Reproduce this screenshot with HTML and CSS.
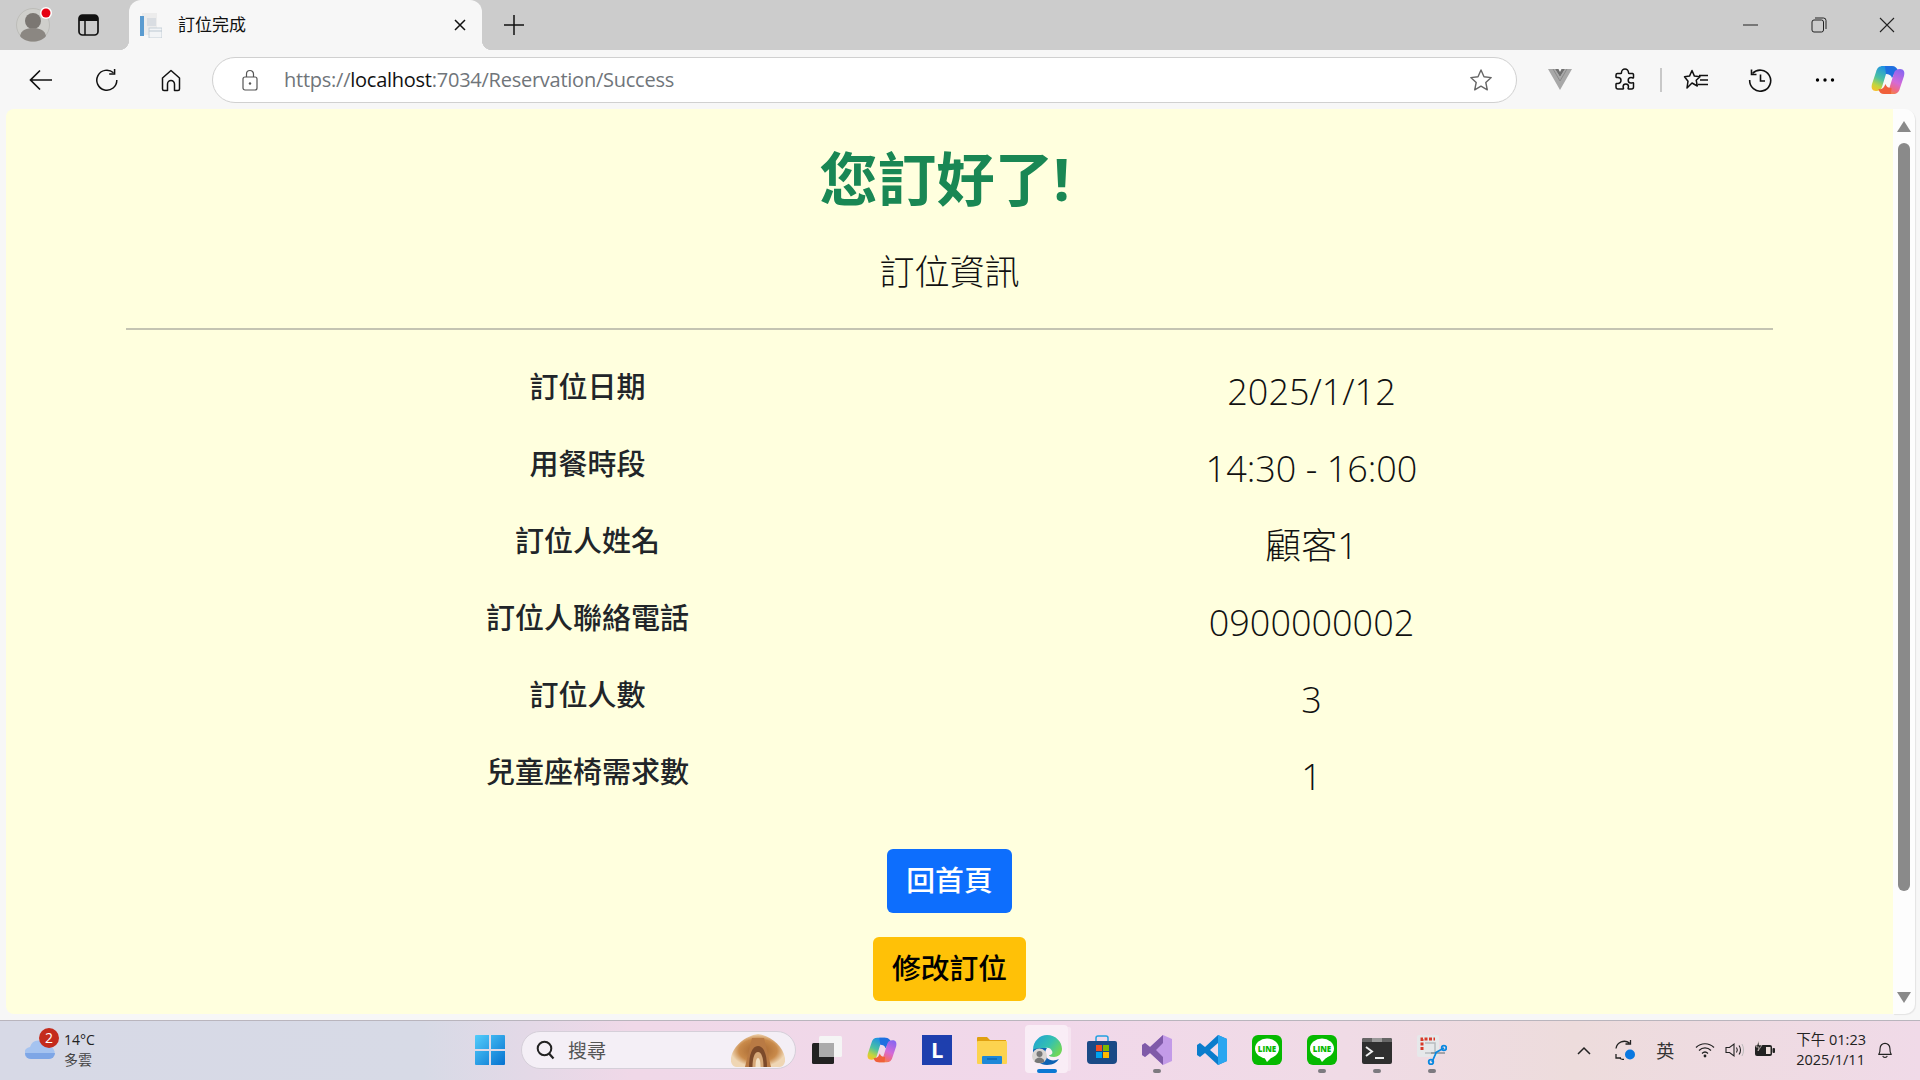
FILE: index.html
```html
<!DOCTYPE html>
<html lang="zh-Hant">
<head>
<meta charset="utf-8">
<title>訂位完成</title>
<link rel="stylesheet" href="styles.css">
</head>
<body>
<div class="browser">
  <header class="tabstrip">
    <div class="profile">
      <svg width="42" height="50" viewBox="0 0 42 50"><circle cx="19" cy="25" r="16.500" fill="#cfcfcb" stroke="#bdbdb9"/><circle cx="19" cy="21" r="8" fill="#7b7772"/><path d="M6 36c1-6 7-8 13-8s12 2 13 8c-3 4-8 5.500-13 5.500S9 40 6 36z" fill="#8b8782"/><circle cx="32" cy="13" r="6" fill="#fff"/><circle cx="32" cy="13" r="4.500" fill="#e60012"/></svg>
    </div>
    <div class="vtabs">
      <svg width="21" height="22" viewBox="0 0 21 22"><rect x="1" y="1" width="19" height="20" rx="3.500" fill="none" stroke="#111" stroke-width="1.700"/><path d="M1 4.500A3.500 3.500 0 0 1 4.500 1h12A3.500 3.500 0 0 1 20 4.500V7H1z" fill="#111"/><path d="M7 7v14" stroke="#111" stroke-width="1.500"/></svg>
    </div>
    <div class="tab">
      <svg class="favicon" width="23" height="25" viewBox="0 0 23 25"><rect x="3" y="0" width="15" height="22" fill="#ececec"/><rect x="1" y="3" width="4" height="20" fill="#5a9bd0"/><rect x="8" y="5" width="9" height="8" fill="#d9dde2"/><rect x="10" y="15" width="13" height="10" fill="#f2f4f6" stroke="#bcc8d2" stroke-width=".8"/><path d="M10 18h13" stroke="#bcc8d2"/></svg>
      <span class="tab-title">訂位完成</span>
      <svg class="tab-close" width="14" height="14" viewBox="0 0 14 14"><path d="M2 2l10 10M12 2L2 12" stroke="#111" stroke-width="1.500"/></svg>
    </div>
    <svg class="newtab" width="20" height="20" viewBox="0 0 20 20"><path d="M10 0v20M0 10h20" stroke="#111" stroke-width="1.500"/></svg>
    <div class="winctl">
      <svg width="16" height="16" viewBox="0 0 16 16"><path d="M0 8h15" stroke="#222" stroke-width="1"/></svg>
      <svg width="16" height="16" viewBox="0 0 16 16"><rect x="1" y="3" width="11.500" height="12" rx="2" fill="none" stroke="#222"/><path d="M4 1h8.500a2.500 2.500 0 0 1 2.500 2.500V12" fill="none" stroke="#222"/></svg>
      <svg width="16" height="16" viewBox="0 0 16 16"><path d="M1 1l14 14M15 1L1 15" stroke="#222" stroke-width="1.100"/></svg>
    </div>
  </header>

  <nav class="toolbar">
    <svg class="tb back" width="28" height="24" viewBox="0 0 28 24"><path d="M13 2.500L3.500 12l9.500 9.500M3.500 12H25" fill="none" stroke="#111" stroke-width="1.700"/></svg>
    <svg class="tb reload" width="24" height="24" viewBox="0 0 24 24"><path d="M18.500 4.800A10 10 0 1 0 21.800 12" fill="none" stroke="#111" stroke-width="1.500"/><path d="M19.600 1v5h-5.400" fill="none" stroke="#111" stroke-width="1.500"/></svg>
    <svg class="tb home" width="22" height="24" viewBox="0 0 22 24"><path d="M11 2.500l8.500 7.500v11a1.500 1.500 0 0 1-1.500 1.500h-3.500V16a3.500 3.500 0 0 0-7 0v6.500H4A1.500 1.500 0 0 1 2.500 21V10z" fill="none" stroke="#111" stroke-width="1.500" stroke-linejoin="round"/></svg>
    <div class="omnibox">
      <svg width="18" height="24" viewBox="0 0 18 24"><rect x="2" y="9" width="14" height="13" rx="2" fill="none" stroke="#555" stroke-width="1.200"/><path d="M5.500 9V6a3.500 3.500 0 0 1 7 0v3" fill="none" stroke="#555" stroke-width="1.200"/><circle cx="9" cy="15.500" r="1.200" fill="#555"/></svg>
      <span class="url">https://<b>localhost</b>:7034/Reservation/Success</span>
      <svg class="star" width="24" height="24" viewBox="0 0 24 24"><path d="M12 2l3 6.800 7.200.8-5.400 4.900 1.500 7.300L12 18.200l-6.300 3.600 1.500-7.300L1.800 9.600 9 8.800z" fill="none" stroke="#666" stroke-width="1.400" stroke-linejoin="round"/></svg>
    </div>
    <div class="tb-right">
      <svg class="ext-v" width="24" height="22" viewBox="0 0 24 22"><path d="M0 0h7l5 8 5-8h7L12 21z" fill="#a8a8a8"/><path d="M7 0h3.500L12 3l1.500-3H17l-5 8z" fill="#6f6f6f"/><path d="M5 0l7 12 7-12" fill="none" stroke="#8a8a8a" stroke-width="1"/></svg>
      <svg class="ext-p" width="24" height="24" viewBox="0 0 24 24"><path d="M8.500 4.500a3.500 3.500 0 0 1 7 0c0 .7 0 1 .5 1h3.500a1.500 1.500 0 0 1 1 1v3c0 1-1.500 0-2.500 0a2.800 2.800 0 0 0 0 5.600c1 0 2.500-1 2.500 0V19a2 2 0 0 1-2 2h-3c-1 0 0-1.500 0-2.300a2.700 2.700 0 0 0-5.400 0c0 .8 1 2.300 0 2.300H5a2 2 0 0 1-2-2v-3c0-1 1.500-.5 2-.5a3 3 0 0 0 0-6c-.6 0-2 .4-2-.5V7a1.500 1.500 0 0 1 1.500-1.500H8c.5 0 .5-.4.500-1z" fill="none" stroke="#111" stroke-width="1.500"/></svg>
      <span class="tb-sep"></span>
      <svg class="fav" width="26" height="24" viewBox="0 0 26 24"><path d="M9 2.500l2.400 5.600 5.600.6-3.800 3.500 1.100 5.800L9 15 4 20l1-6.800L1.500 8.800l5-.7z" fill="none" stroke="#111" stroke-width="1.500" stroke-linejoin="round"/><path d="M16 7.500h9M17 12h8M15 16.500h10" stroke="#111" stroke-width="1.500"/></svg>
      <svg class="hist" width="24" height="24" viewBox="0 0 24 24"><path d="M4.500 5.500A10.500 10.500 0 1 1 1.700 12" fill="none" stroke="#111" stroke-width="1.600"/><path d="M3.500 1.500v5h5" fill="none" stroke="#111" stroke-width="1.600"/><path d="M12.500 6.500V13H17" fill="none" stroke="#111" stroke-width="1.600"/></svg>
      <svg class="more" width="20" height="6" viewBox="0 0 20 6"><circle cx="2.500" cy="3" r="1.700"/><circle cx="10" cy="3" r="1.700"/><circle cx="17.500" cy="3" r="1.700"/></svg>
      <svg class="copilot" width="34" height="30" viewBox="0 0 34 30"><use href="#copilot-mark"/></svg>
    </div>
  </nav>

  <main class="viewport">
    <div class="page">
      <h1 class="headline">您訂好了!</h1>
      <h2 class="subhead">訂位資訊</h2>
      <hr class="rule">
      <div class="details">
        <div class="label">訂位日期</div><div class="value">2025/1/12</div>
        <div class="label">用餐時段</div><div class="value">14:30 - 16:00</div>
        <div class="label">訂位人姓名</div><div class="value">顧客1</div>
        <div class="label">訂位人聯絡電話</div><div class="value">0900000002</div>
        <div class="label">訂位人數</div><div class="value">3</div>
        <div class="label">兒童座椅需求數</div><div class="value">1</div>
      </div>
      <div class="actions">
        <a class="btn btn-blue">回首頁</a>
        <a class="btn btn-yellow">修改訂位</a>
      </div>
    </div>
    <aside class="scrollbar">
      <span class="arrow up"></span>
      <span class="thumb"></span>
      <span class="arrow down"></span>
    </aside>
  </main>

  <footer class="taskbar">
    <div class="weather">
      <svg class="cloud" width="30" height="20" viewBox="0 0 30 20"><path d="M6 20a6 6 0 0 1-1-12 9 9 0 0 1 17-1 6.500 6.500 0 0 1 2 13z" fill="#a5c3f0"/><path d="M0 14h30a6 6 0 0 1-6 6H6a6 6 0 0 1-6-6z" fill="#7ea6e6"/></svg>
      <span class="badge">2</span>
      <div class="weather-text"><span>14°C</span><span class="muted">多雲</span></div>
    </div>
    <div class="task-center">
      <svg class="winlogo" width="30" height="30" viewBox="0 0 30 30"><defs><linearGradient id="w" x1="0" y1="0" x2="1" y2="1"><stop offset="0" stop-color="#52cdfb"/><stop offset="1" stop-color="#0672d0"/></linearGradient></defs><path d="M0 1a1 1 0 0 1 1-1h13v14H0zM16 0h13a1 1 0 0 1 1 1v13H16zM0 16h14v14H1a1 1 0 0 1-1-1zM16 16h14v13a1 1 0 0 1-1 1H16z" fill="url(#w)"/></svg>
      <div class="searchbox">
        <svg class="search-icon" width="19" height="20" viewBox="0 0 19 20"><circle cx="8.500" cy="8.500" r="6.800" fill="none" stroke="#222" stroke-width="2"/><path d="M13 13.500l4.500 5" stroke="#222" stroke-width="2.200"/></svg>
        <span class="search-text">搜尋</span>
        <svg class="search-art" width="54" height="33" viewBox="0 0 54 33"><defs><radialGradient id="art"><stop offset="0" stop-color="#a0612c"/><stop offset=".7" stop-color="#c98a4a"/><stop offset="1" stop-color="#efd6b4"/></radialGradient></defs><path d="M0 24C2 12 14 2 27 0c13 2 25 12 27 24 1 5-2 9-5 9H5c-3 0-6-4-5-9z" fill="url(#art)"/><path d="M14 33L21 4h12l7 29z" fill="#b97a44"/><path d="M18 33c0-12 3-21 9-21s9 9 9 21z" fill="#7c4a2a"/><path d="M21.500 33c0-9 2-15 5.500-15s5.500 6 5.500 15z" fill="#d6a878"/><path d="M24.500 33c0-6 1-9 2.500-9s2.500 3 2.500 9z" fill="#f3e2c8"/></svg>
      </div>
      <div class="apps">
        <div class="app"><svg width="30" height="30" viewBox="0 0 30 30"><rect x="7" y="1" width="23" height="21" rx="1.500" fill="#f5f5f5"/><rect x="0" y="8" width="22" height="21" rx="1.500" fill="#222"/><rect x="7" y="8" width="15" height="14" fill="#ababab"/></svg></div>
        <div class="app"><svg width="30" height="30" viewBox="0 0 34 30"><use href="#copilot-mark"/></svg></div>
        <div class="app"><svg width="30" height="30" viewBox="0 0 30 30"><rect width="30" height="30" fill="#1e3fae"/><text x="9" y="23" class="l-mark">L</text></svg></div>
        <div class="app"><svg width="30" height="30" viewBox="0 0 30 30"><path d="M0 3a1 1 0 0 1 1-1h9l3 3h16v6H0z" fill="#e0a010"/><rect y="6" width="30" height="23" rx="1" fill="#fcd34f"/><rect x="5" y="21" width="20" height="8" rx="1" fill="#1e88d8"/><path d="M10 24h10" stroke="#0b5fa8" stroke-width="1.200"/></svg></div>
        <div class="app active"><svg width="30" height="30" viewBox="0 0 30 30"><defs><linearGradient id="e" x1="0" y1="0" x2="1" y2=".6"><stop offset="0" stop-color="#1f9fd8"/><stop offset=".6" stop-color="#35c1b0"/><stop offset="1" stop-color="#6fd65a"/></linearGradient></defs><path d="M1 15C1 6 8 0 15 0c9 0 15 7 15 14 0 5-4 8-8 8-3 0-5-1-5-2 3 0 4-2 3-4-1-3-4-4-7-3-6 1-9 6-12 9z" fill="url(#e)"/><path d="M1 15c-1 9 7 15 14 15 6 0 10-3 12-6-4 2-9 2-12-1-2-2-3-6 0-10-7 0-11 0-14 2z" fill="#0e63b4"/><circle cx="7.500" cy="21" r="7.500" fill="#d9d5d2"/><circle cx="7.500" cy="19" r="3" fill="#777"/><path d="M2.500 26.500c1-3 3-4 5-4s4 1 5 4c-2 2-8 2-10 0z" fill="#777"/></svg></div>
        <div class="app"><svg width="30" height="30" viewBox="0 0 30 30"><path d="M9 6V3a2 2 0 0 1 2-2h8a2 2 0 0 1 2 2v3" fill="none" stroke="#23a0e0" stroke-width="1.500"/><path d="M0 8a2 2 0 0 1 2-2h26a2 2 0 0 1 2 2v17a4 4 0 0 1-4 4H4a4 4 0 0 1-4-4z" fill="#1a4a86"/><rect x="9" y="10" width="6" height="6" fill="#f25022"/><rect x="16" y="10" width="6" height="6" fill="#7fba00"/><rect x="9" y="17" width="6" height="6" fill="#00a4ef"/><rect x="16" y="17" width="6" height="6" fill="#ffb900"/></svg></div>
        <div class="app running"><svg width="30" height="30" viewBox="0 0 30 30"><path d="M21 0l9 4v22l-9 4-13-12-5 4-3-2V10l3-2 5 4z" fill="#c39be8"/><path d="M21 0L8 12 3 8l-3 2v10l3 2 5-4 13 12v-8l-7-7 7-7z" fill="#7f5aa8"/></svg></div>
        <div class="app"><svg width="30" height="30" viewBox="0 0 30 30"><path d="M21 0l9 4v22l-9 4L8 18l-5 4-3-2V10l3-2 5 4z" fill="#0a7ccc"/><path d="M21 0l9 4v22l-9 4z" fill="#2aa6f0"/><path d="M21 8l-8 7 8 7z" fill="#f0dcec"/></svg></div>
        <div class="app"><svg width="30" height="30" viewBox="0 0 30 30"><rect width="30" height="30" rx="6" fill="#06b900"/><ellipse cx="15" cy="13.500" rx="12" ry="10" fill="#fff"/><path d="M12 22l3 5 5-5z" fill="#fff"/><text x="15" y="16.500" class="line-mark">LINE</text></svg></div>
        <div class="app running"><svg width="30" height="30" viewBox="0 0 30 30"><rect width="30" height="30" rx="6" fill="#06b900"/><ellipse cx="15" cy="13.500" rx="12" ry="10" fill="#fff"/><path d="M12 22l3 5 5-5z" fill="#fff"/><text x="15" y="16.500" class="line-mark">LINE</text></svg></div>
        <div class="app running"><svg width="30" height="30" viewBox="0 0 30 30"><rect y="3" width="30" height="26" rx="2" fill="#2f2f2f"/><path d="M0 5a2 2 0 0 1 2-2h26a2 2 0 0 1 2 2v2H0z" fill="#666"/><rect x="10" y="3" width="10" height="4" fill="#999"/><path d="M4 12l6 4.500-6 4.500" fill="none" stroke="#eee" stroke-width="2"/><path d="M13 23h9" stroke="#eee" stroke-width="2"/></svg></div>
        <div class="app running"><svg width="30" height="30" viewBox="0 0 30 30"><rect width="22" height="22" rx="2" fill="#e6e8ea"/><path d="M5 15V4h13" fill="none" stroke="#d83a2a" stroke-width="3" stroke-dasharray="3 1.500"/><path d="M8 8h10v10H8" fill="none" stroke="#b8bcc0" stroke-width="1.500"/><path d="M14 18h14" stroke="#8a9096" stroke-width="1.500"/><path d="M15 27l4-9M27 13l-9 5" stroke="#0a88e0" stroke-width="1.800"/><circle cx="14" cy="27" r="2.300" fill="none" stroke="#0a88e0" stroke-width="1.800"/><circle cx="27" cy="13" r="2.300" fill="none" stroke="#0a88e0" stroke-width="1.800"/></svg></div>
      </div>
    </div>
    <div class="tray">
      <svg class="chev" width="14" height="9" viewBox="0 0 14 9"><path d="M1 8l6-6 6 6" fill="none" stroke="#222" stroke-width="1.500"/></svg>
      <svg class="sync" width="20" height="20" viewBox="0 0 20 20"><path d="M1 8.500A8.500 8.500 0 0 1 14.500 3M15.500 0v4h-5M5 18.500c1.500.7 3 1 4 1M1 14v4h5" fill="none" stroke="#222" stroke-width="1.300"/><circle cx="15" cy="14.500" r="5" fill="#0a78e0"/></svg>
      <span class="ime">英</span>
      <svg class="wifi" width="20" height="16" viewBox="0 0 20 16"><path d="M1 5.500c5-5 13-5 18 0M4 8.500c3.500-3.500 8.500-3.500 12 0M7 11.500c1.800-1.800 4.200-1.800 6 0" fill="none" stroke="#222" stroke-width="1.200"/><circle cx="10" cy="14" r="1.400" fill="#222"/></svg>
      <svg class="vol" width="20" height="16" viewBox="0 0 20 16"><path d="M1 5.500h3.500L9 2v12l-4.500-3.500H1z" fill="none" stroke="#222" stroke-width="1.100"/><path d="M11.500 5.500c1 1.500 1 3.500 0 5M14 3.500c2 2.500 2 6.500 0 9" fill="none" stroke="#222" stroke-width="1.100"/><path d="M17 2c2 3.500 2 8.500 0 12" fill="none" stroke="#bbb" stroke-width="1"/></svg>
      <svg class="batt" width="20" height="18" viewBox="0 0 20 18"><rect x="0" y="4" width="17" height="11" rx="2" fill="#222"/><rect x="17.500" y="7" width="2.500" height="5" rx="1" fill="#222"/><rect x="11" y="6" width="4.500" height="7" fill="#eedfdc"/><path d="M4 0L1 6h3l-1 4 4-6H4z" fill="#222" stroke="#eedfdc" stroke-width=".6"/></svg>
      <div class="clock"><span>下午 01:23</span><span>2025/1/11</span></div>
      <svg class="bell" width="16" height="18" viewBox="0 0 18 20"><path d="M2 15c1.500-2 1.500-4 1.500-7a5.500 5.500 0 0 1 11 0c0 3 0 5 1.500 7z" fill="none" stroke="#222" stroke-width="1.300" stroke-linejoin="round"/><path d="M6.500 16.500c.5 2.500 4.500 2.500 5 0" fill="none" stroke="#222" stroke-width="1.300"/></svg>
    </div>
  </footer>
</div>
<svg class="defs" width="0" height="0"><defs>
  <linearGradient id="cpB" x1=".6" y1="0" x2=".2" y2="1"><stop offset="0" stop-color="#1b8fe8"/><stop offset=".5" stop-color="#4cc2a0"/><stop offset=".8" stop-color="#c5d53c"/><stop offset="1" stop-color="#f7c12a"/></linearGradient>
  <linearGradient id="cpC" x1=".7" y1="0" x2=".3" y2="1"><stop offset="0" stop-color="#8a66f0"/><stop offset=".5" stop-color="#d46ad8"/><stop offset=".8" stop-color="#f06a80"/><stop offset="1" stop-color="#f28a3c"/></linearGradient>
  <symbol id="copilot-mark" viewBox="0 0 34 30">
    <path d="M12 1h9c-4 1-5 5-6 8l-4 13c-1 3-3 4-6 4-4 0-5-3-4-7L5 7c1-4 3-6 7-6z" fill="url(#cpB)"/>
    <path d="M14 1h7c3 0 5.500 2 6 5 .2 1 0 2.500 0 2.500-3-.5-4 0-5 3l-1 1.500c-1-3-3-4-6-4z" fill="#1f6fe0"/>
    <path d="M22 29h-9c4-1 5-5 6-8l4-13c1-3 3-4 6-4 4 0 5 3 4 7l-4 12c-1 4-3 6-7 6z" fill="url(#cpC)"/>
    <path d="M20 29h-7c-3 0-5-2-5.500-5 3 .5 5-.5 6-3l1-2c1 3 3 4 6 4z" fill="#f0603a"/>
  </symbol>
</defs></svg>
</body>
</html>
```

FILE: styles.css
```css
* { box-sizing: border-box; }
html, body { margin: 0; height: 100%; overflow: hidden; }
body {
  font-family: "Open Sans", "Noto Sans CJK TC", sans-serif;
  color: #212529;
}
.browser { width: 1920px; height: 1080px; display: flex; flex-direction: column; background: #f7f7f7; }
.defs { display: block; height: 0; position: absolute; }

/* tab strip */
.tabstrip { height: 50px; flex: none; background: #cccccc; display: flex; align-items: center; }
.profile { width: 42px; margin-left: 14px; height: 50px; }
.vtabs { margin-left: 22px; width: 21px; height: 22px; }
.tab {
  width: 353px; height: 50px; margin-left: 30px; position: relative;
  background: #f7f7f7; border-radius: 12px 12px 0 0;
  display: flex; align-items: center;
  padding-left: 10px; padding-right: 15px;
}
.tab::before, .tab::after { content: ""; position: absolute; bottom: 0; width: 10px; height: 10px; }
.tab::before { left: -10px; background: radial-gradient(circle at 0 0, transparent 10px, #f7f7f7 10.5px); }
.tab::after { right: -10px; background: radial-gradient(circle at 100% 0, transparent 10px, #f7f7f7 10.5px); }
.favicon { flex: none; }
.tab-title { margin-left: 16px; margin-top: -4px; font-size: 17px; color: #111; flex: 1; }
.tab-close { flex: none; }
.newtab { margin-left: 22px; }
.winctl { margin-left: auto; display: flex; gap: 52px; padding-right: 25px; align-items: center; }

/* toolbar */
.toolbar { height: 59px; flex: none; display: flex; align-items: center; background: #f7f7f7; position: relative; }
.tb { flex: none; }
.back { margin-left: 27px; }
.reload { margin-left: 40px; }
.home { margin-left: 41px; }
.omnibox {
  margin-left: 30px; width: 1305px; height: 46px; flex: none;
  background: #fff; border: 1.500px solid #d0d0d0; border-radius: 23px;
  display: flex; align-items: center; padding-left: 28px; padding-right: 23px;
}
.url { margin-left: 25px; font-size: 20px; color: #70757a; flex: 1; letter-spacing: -.25px; }
.url b { font-weight: 400; color: #111; }
.tb-right { display: flex; align-items: center; flex: 1; padding-left: 31px; }
.ext-p { margin-left: 41px; }
.tb-sep { width: 2px; height: 24px; background: #c8c8c8; margin-left: 23px; }
.fav { margin-left: 21px; }
.hist { margin-left: 39px; }
.more { margin-left: 43px; }
.copilot { margin-left: 36px; }

/* page */
.viewport { flex: 1; min-height: 0; display: flex; padding: 0 5px 6px 6px; background: #f7f7f7; }
.page {
  flex: 1; min-width: 0; background: #ffffde;
  border-top-left-radius: 8px; border-bottom-left-radius: 8px;
  display: flex; flex-direction: column; align-items: center;
  overflow: hidden;
}
.headline { margin: 34px 10px 0 0; font-size: 58.500px; line-height: 70px; font-weight: 700; color: #198754; white-space: nowrap; }
.subhead { margin: 38px 0 0; font-size: 35px; line-height: 42px; font-weight: 300; color: #111; }
.rule { width: 1647px; height: 2px; border: 0; background: #c4c4b2; margin: 35px 0 0; flex: none; }
.details { display: grid; grid-template-columns: 724px 724px; margin-top: 26px; }
.label { height: 77px; text-align: center; font-size: 29px; line-height: 62px; font-weight: 500; }
.value { height: 77px; text-align: center; font-size: 36px; line-height: 72px; font-weight: 300; color: #111; }
.actions { display: flex; flex-direction: column; align-items: center; gap: 24px; margin-top: 31px; }
.btn { display: block; height: 64px; padding: 0 19px; border-radius: 6px; font-size: 28.800px; line-height: 62px; font-weight: 500; }
.btn-blue { background: #0d6efd; color: #fff; }
.btn-yellow { background: #ffc107; color: #000; }

/* scrollbar */
.scrollbar { width: 22px; flex: none; background: #fdfdfd; border-radius: 0 10px 10px 0; box-shadow: 1px 1px 1px rgba(0,0,0,.08); position: relative; }
.thumb { position: absolute; top: 34px; left: 5px; width: 12px; height: 748px; border-radius: 6px; background: #8a8a8a; }
.arrow { position: absolute; left: 4px; width: 0; height: 0; border-left: 7px solid transparent; border-right: 7px solid transparent; }
.arrow.up { top: 12px; border-bottom: 11px solid #8a8a8a; }
.arrow.down { bottom: 11px; border-top: 11px solid #8a8a8a; }

/* taskbar */
.taskbar {
  height: 60px; flex: none; display: flex; align-items: center; position: relative;
  border-top: 1px solid #b9b5bd; padding-bottom: 1px;
  background: linear-gradient(90deg, #d7d9e6 0, #d7dae6 22%, #f0d8e8 33%, #f1d8ea 55%, #f0dbe6 70%, #eddcdc 82%, #f0dae8 100%);
}
.weather { position: relative; width: 110px; flex: none; display: flex; padding-left: 25px; align-items: center; }
.cloud { flex: none; margin-top: -2px; }
.badge { position: absolute; left: 39px; top: -2px; width: 20px; height: 20px; border-radius: 50%; background: #c42b1c; color: #fff; font-size: 14px; line-height: 20px; text-align: center; }
.weather-text { margin-left: 9px; display: flex; flex-direction: column; font-size: 14px; line-height: 20px; color: #222; }
.muted { color: #444; }
.task-center { display: flex; align-items: center; margin-left: 365px; }
.winlogo { flex: none; }
.searchbox {
  margin-left: 16px; width: 275px; height: 38px; border-radius: 19px; background: #f4eff6; border: 1px solid #d5cfd9;
  display: flex; align-items: center; padding-left: 14px; padding-right: 10px;
}
.search-icon { flex: none; }
.search-text { margin-left: 13px; font-size: 19px; color: #555; flex: 1; }
.search-art { flex: none; }
.apps { display: flex; margin-left: 3px; align-items: center; }
.app { width: 55px; height: 56px; display: flex; align-items: center; justify-content: center; position: relative; flex: none; }
.app svg { position: relative; }
.app.active::before { content: ""; position: absolute; left: 6px; top: 3px; width: 43px; height: 48px; background: rgba(255,255,255,.55); border-radius: 4px; box-shadow: 5px 0 0 -2px rgba(255,255,255,.35); }
.app.active::after { content: ""; position: absolute; left: 18px; bottom: 5px; width: 20px; height: 4px; border-radius: 2px; background: #0a78d4; }
.app.running::after { content: ""; position: absolute; left: 50%; margin-left: -4px; bottom: 5px; width: 8px; height: 4px; border-radius: 2px; background: #7d7a80; }
.l-mark { font-family: "Open Sans", sans-serif; font-weight: 700; font-size: 22px; fill: #fff; }
.line-mark { font-family: "Open Sans", sans-serif; font-weight: 800; font-size: 8px; fill: #06b900; text-anchor: middle; }
.tray { margin-left: auto; display: flex; align-items: center; color: #222; padding-right: 27px; }
.sync { margin-left: 24px; }
.ime { margin-left: 21px; font-size: 18px; color: #333; }
.wifi { margin-left: 21px; }
.vol { margin-left: 10px; }
.batt { margin-left: 10px; }
.clock { margin-left: 21px; display: flex; flex-direction: column; font-size: 14.500px; line-height: 20px; }
.bell { margin-left: 11px; }
```
